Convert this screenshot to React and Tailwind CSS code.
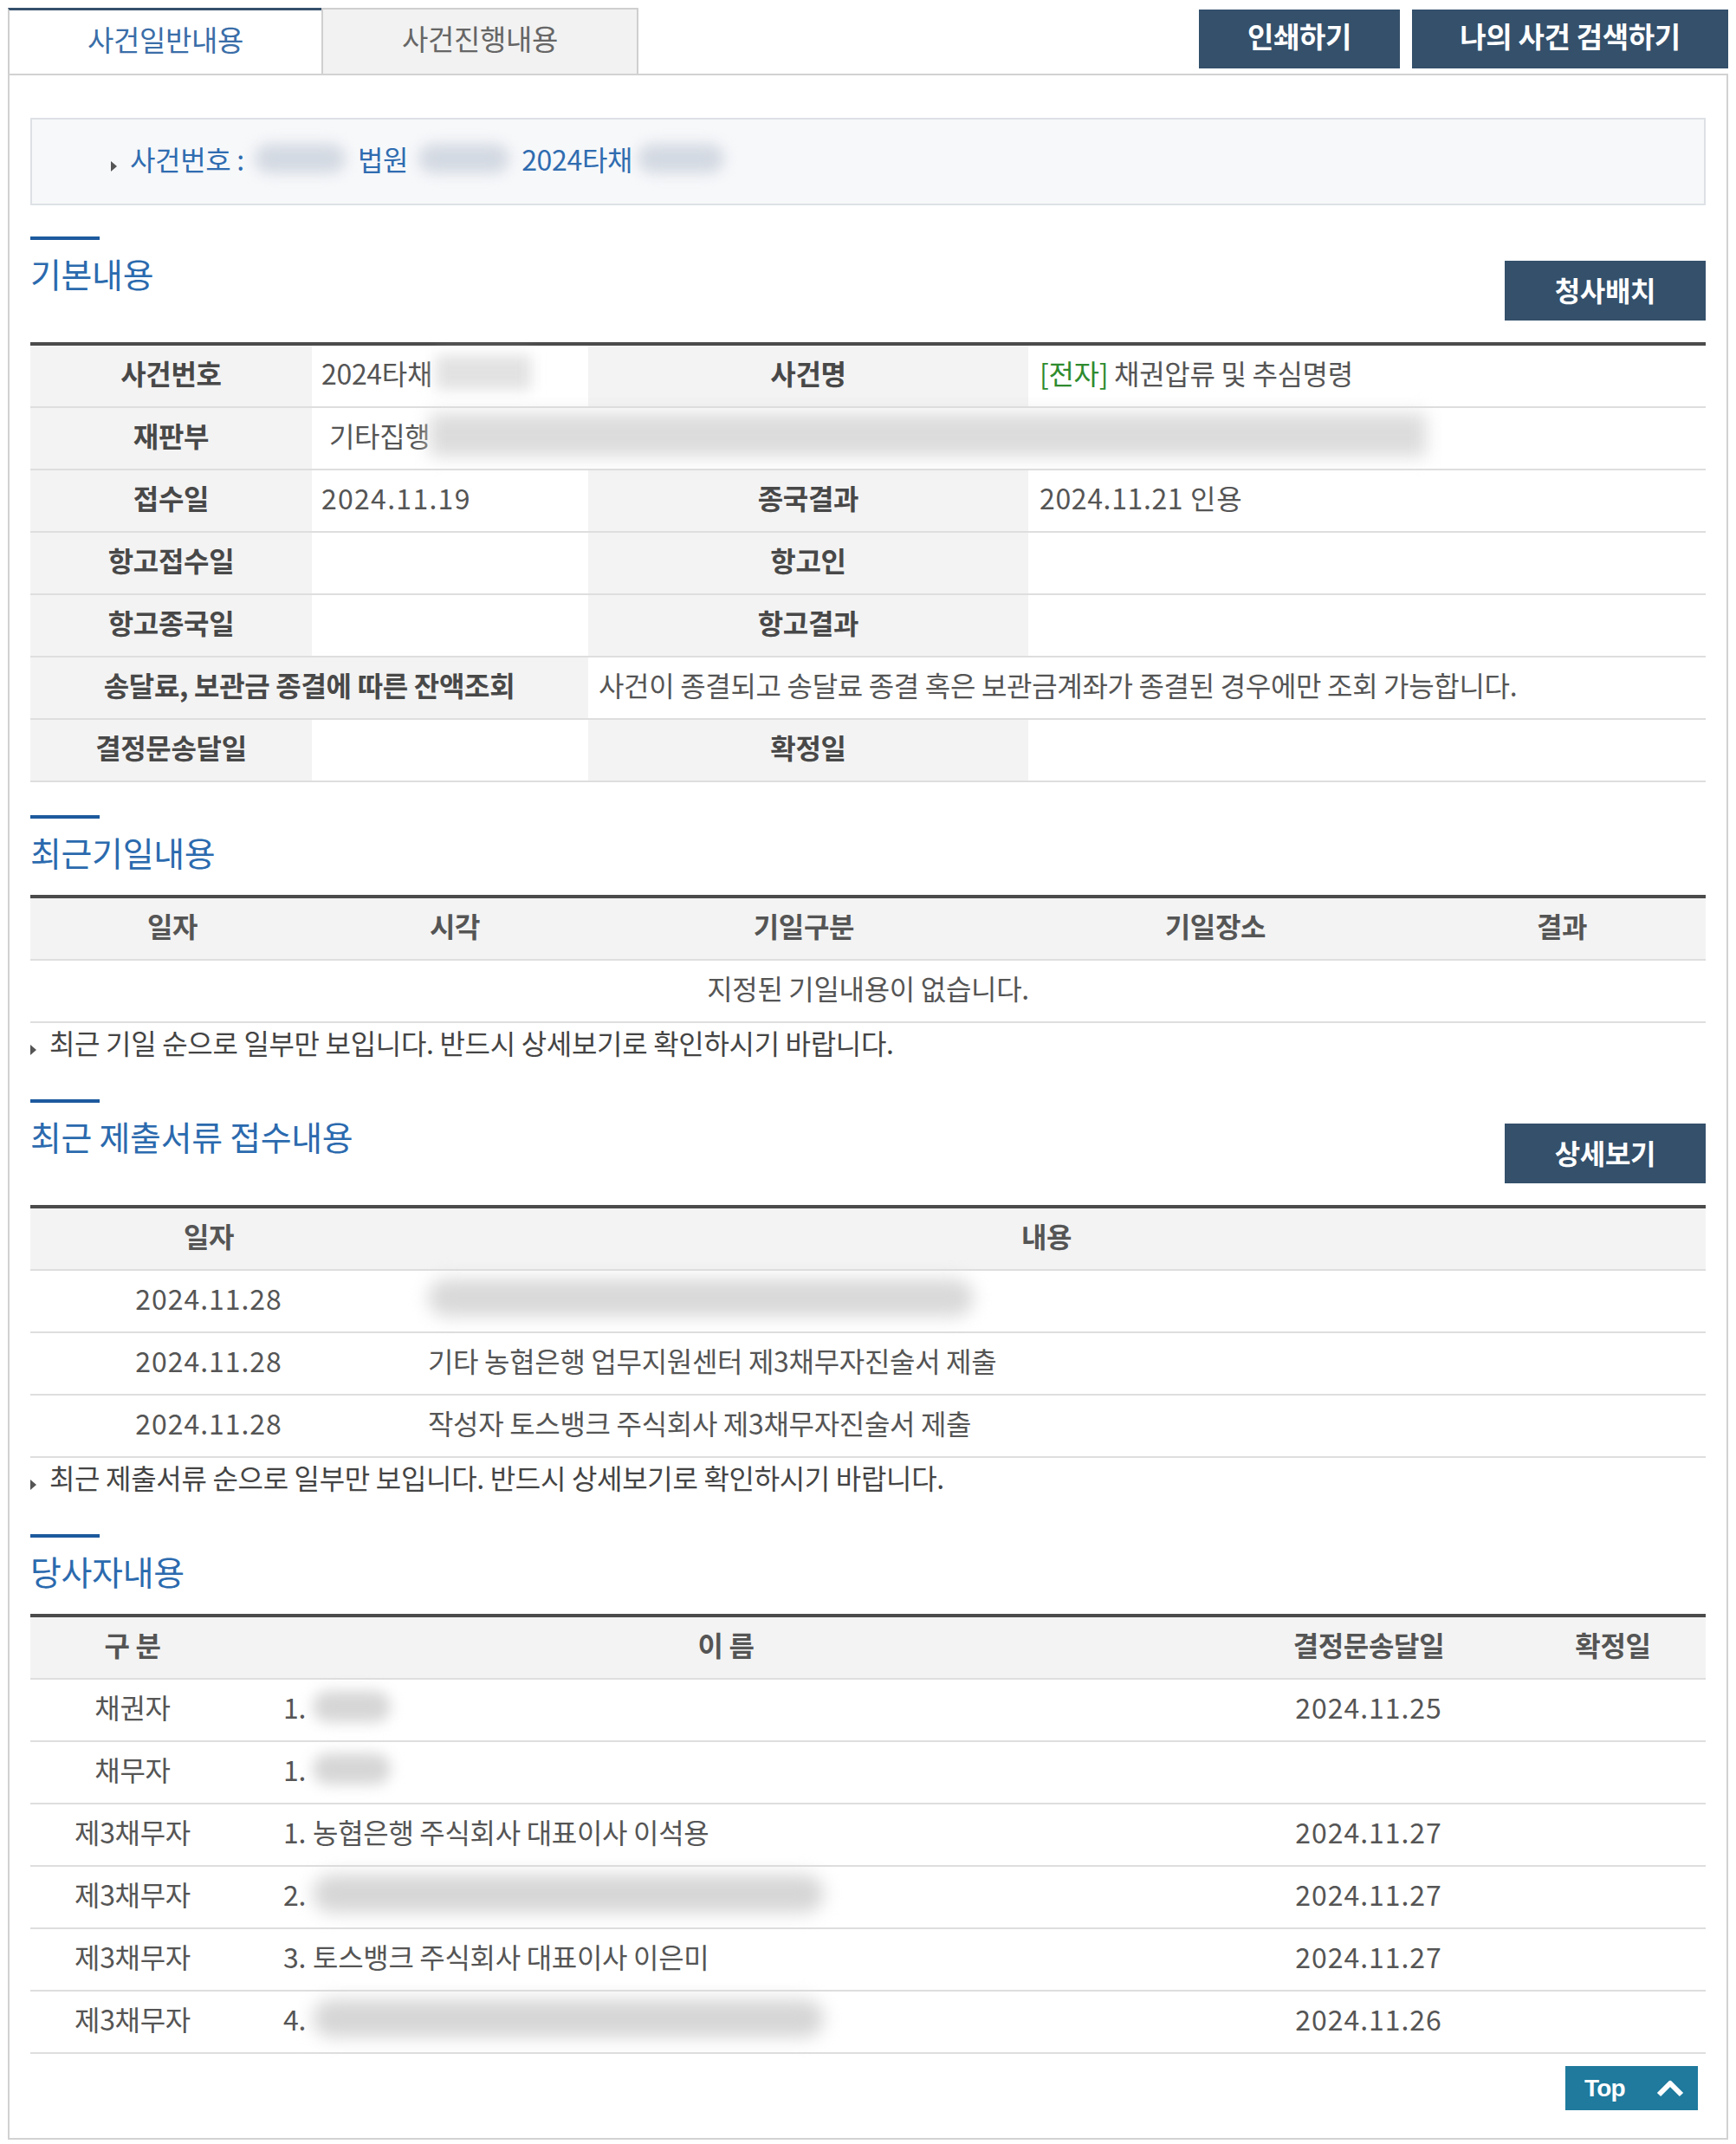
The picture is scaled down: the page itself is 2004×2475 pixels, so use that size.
import { useState } from "react";

// 기본내용 rows
const basicRows = [
    { l1: "사건번호", v1: "2024타채", blur1: true, l2: "사건명", v2: "case" },
    { l1: "재판부", v1: "기타집행", court: true },
    { l1: "접수일", v1: "2024.11.19", num: true, l2: "종국결과", v2: "2024.11.21 인용" },
    { l1: "항고접수일", v1: "", l2: "항고인", v2: "" },
    { l1: "항고종국일", v1: "", l2: "항고결과", v2: "" },
    { wide: true, l1: "송달료, 보관금 종결에 따른 잔액조회", v1: "사건이 종결되고 송달료 종결 혹은 보관금계좌가 종결된 경우에만 조회 가능합니다." },
    { l1: "결정문송달일", v1: "", l2: "확정일", v2: "" },
];

const docs = [
    { date: "2024.11.28", text: "", hidden: true },
    { date: "2024.11.28", text: "기타 농협은행 업무지원센터 제3채무자진술서 제출" },
    { date: "2024.11.28", text: "작성자 토스뱅크 주식회사 제3채무자진술서 제출" },
];

const parties = [
    { type: "채권자", no: "1.", name: "", blur: "short", date: "2024.11.25" },
    { type: "채무자", no: "1.", name: "", blur: "short", date: "" },
    { type: "제3채무자", no: "1.", name: "농협은행 주식회사 대표이사 이석용", date: "2024.11.27" },
    { type: "제3채무자", no: "2.", name: "", blur: "long", date: "2024.11.27" },
    { type: "제3채무자", no: "3.", name: "토스뱅크 주식회사 대표이사 이은미", date: "2024.11.27" },
    { type: "제3채무자", no: "4.", name: "", blur: "long", date: "2024.11.26" },
];

// cell: centred vertically, nudged up a little for the CJK font
const cell = "flex items-center pb-[8px]";
const label = "flex items-center justify-center pb-[8px] bg-[#f3f3f3] font-bold text-[#484848]";

// small ▸ bullet
const Bullet = () => (
    <span className="mt-[18px] mr-[15px] h-0 w-0 border-y-[6px] border-l-[7px] border-y-transparent border-l-[#555]" />
);

const SectionHead = ({ title, button }) => (
    <div className={button ? "flex h-[122px] items-start justify-between" : "flex h-[92px] items-start justify-between"}>
        <div>
            <div className="h-[4px] w-[80px] bg-[#1d5a9e]" />
            <h2 className="mt-[14px] text-[39px] leading-[48px] text-[#2b6aae]">{title}</h2>
        </div>
        {button && (
            <button className="mt-[28px] h-[69px] w-[232px] bg-[#34506b] pb-[4px] text-[32px] font-bold text-white">
                {button}
            </button>
        )}
    </div>
);

const Note = ({ children }) => (
    <div className="flex h-[50px] items-center pb-[6px] text-[#444]">
        <Bullet />
        <span>{children}</span>
    </div>
);

const Row = ({ children, head }) => (
    <div className={head
        ? "flex h-[72px] border-b-2 border-[#dedede] bg-[#f3f3f3] text-center font-bold text-[#555]"
        : "flex h-[72px] border-b-2 border-[#dedede]"}
    >
        {children}
    </div>
);

const App = () => {
    const [tab, setTab] = useState(0);

    return (
        <div className="min-h-[2475px] w-full bg-white px-[9px] pt-[9px] font-['Noto_Sans_CJK_KR','Noto_Sans',sans-serif] text-[32px] tracking-[-0.01em] text-[#555]">

            {/* tabs + top buttons */}
            <div className="flex h-[76px] items-start justify-between">
                <div className="flex h-[76px]">
                    <div
                        onClick={() => setTab(0)}
                        className={tab === 0
                            ? "flex h-[76px] w-[362px] items-center justify-center border-t-[3px] border-l-2 border-t-[#34506b] border-l-[#cfcfcf] bg-white pb-[6px] text-[33px] text-[#3a6ea8]"
                            : "flex h-[76px] w-[362px] items-center justify-center border-2 border-b-0 border-[#cfcfcf] bg-[#f2f2f2] pb-[6px] text-[33px] text-[#666]"}
                    >
                        사건일반내용
                    </div>
                    <div
                        onClick={() => setTab(1)}
                        className={tab === 1
                            ? "flex h-[76px] w-[366px] items-center justify-center border-t-[3px] border-r-2 border-t-[#34506b] border-r-[#cfcfcf] bg-white pb-[6px] text-[33px] text-[#3a6ea8]"
                            : "flex h-[76px] w-[366px] items-center justify-center border-2 border-b-0 border-[#cfcfcf] bg-[#f2f2f2] pb-[6px] text-[33px] text-[#666]"}
                    >
                        사건진행내용
                    </div>
                </div>
                <div className="flex gap-[14px] pt-[2px]">
                    <button className="h-[68px] w-[232px] bg-[#34506b] pb-[6px] text-[33px] font-bold text-white">인쇄하기</button>
                    <button className="h-[68px] w-[365px] bg-[#34506b] pb-[6px] text-[33px] font-bold text-white">나의 사건 검색하기</button>
                </div>
            </div>

            <div className="border-2 border-[#d2d2d2] px-[24px] pt-[49px] pb-[32px]">

                {/* case number box */}
                <div className="flex h-[101px] items-center border-2 border-[#dde1e6] bg-[#f7f8fa] pb-[8px] pl-[91px] text-[#2f6cb0]">
                    <Bullet />
                    <span>사건번호 :</span>
                    <span className="ml-[12px] h-[34px] w-[105px] rounded-full bg-[#d3d9e2] blur-[8px]" />
                    <span className="ml-[14px]">법원</span>
                    <span className="ml-[12px] h-[34px] w-[105px] rounded-full bg-[#d3d9e2] blur-[8px]" />
                    <span className="ml-[14px]">2024타채</span>
                    <span className="ml-[6px] h-[34px] w-[100px] rounded-full bg-[#d3d9e2] blur-[8px]" />
                </div>

                {/* 기본내용 */}
                <div className="mt-[36px]">
                    <SectionHead title="기본내용" button="청사배치" />
                    <div className="border-t-4 border-[#4b4b4b]">
                        {basicRows.map((r, i) =>
                            r.wide ? (
                                <Row key={i}>
                                    <div className={`${label} w-[644px]`}>{r.l1}</div>
                                    <div className={`${cell} flex-1 pl-[12px]`}>{r.v1}</div>
                                </Row>
                            ) : (
                                <Row key={i}>
                                    <div className={`${label} w-[325px]`}>{r.l1}</div>
                                    {r.court ? (
                                        <div className={`${cell} flex-1 pl-[20px]`}>
                                            <span>{r.v1}</span>
                                            <span className="h-[50px] w-[1150px] bg-[#dcdcdc] blur-[10px]" />
                                        </div>
                                    ) : (
                                        <>
                                            <div className={`${cell} w-[319px] pl-[11px]`}>
                                                <span className={r.num ? "tracking-[0.04em]" : ""}>{r.v1}</span>
                                                {r.blur1 && <span className="ml-[4px] h-[40px] w-[110px] bg-[#e2e2e2] blur-[8px]" />}
                                            </div>
                                            <div className={`${label} w-[508px]`}>{r.l2}</div>
                                            <div className={`${cell} flex-1 pl-[13px]`}>
                                                {r.v2 === "case" ? (
                                                    <span><span className="text-[#2e8b2e]">[전자]</span> 채권압류 및 추심명령</span>
                                                ) : (
                                                    <span className="tracking-[0.02em]">{r.v2}</span>
                                                )}
                                            </div>
                                        </>
                                    )}
                                </Row>
                            )
                        )}
                    </div>
                </div>

                {/* 최근기일내용 */}
                <div className="mt-[38px]">
                    <SectionHead title="최근기일내용" />
                    <div className="border-t-4 border-[#4b4b4b]">
                        <Row head>
                            <div className={`${cell} w-[328px] justify-center`}>일자</div>
                            <div className={`${cell} w-[324px] justify-center`}>시각</div>
                            <div className={`${cell} w-[482px] justify-center`}>기일구분</div>
                            <div className={`${cell} w-[468px] justify-center`}>기일장소</div>
                            <div className={`${cell} flex-1 justify-center`}>결과</div>
                        </Row>
                        <Row>
                            <div className={`${cell} flex-1 justify-center`}>지정된 기일내용이 없습니다.</div>
                        </Row>
                    </div>
                    <Note>최근 기일 순으로 일부만 보입니다. 반드시 상세보기로 확인하시기 바랍니다.</Note>
                </div>

                {/* 최근 제출서류 접수내용 */}
                <div className="mt-[38px]">
                    <SectionHead title="최근 제출서류 접수내용" button="상세보기" />
                    <div className="border-t-4 border-[#4b4b4b]">
                        <Row head>
                            <div className={`${cell} w-[412px] justify-center`}>일자</div>
                            <div className={`${cell} flex-1 justify-center`}>내용</div>
                        </Row>
                        {docs.map((d, i) => (
                            <Row key={i}>
                                <div className={`${cell} w-[412px] justify-center tracking-[0.03em]`}>{d.date}</div>
                                <div className={`${cell} flex-1 pl-[47px]`}>
                                    {d.hidden ? (
                                        <span className="h-[44px] w-[630px] rounded-full bg-[#d9d9d9] blur-[10px]" />
                                    ) : d.text}
                                </div>
                            </Row>
                        ))}
                    </div>
                    <Note>최근 제출서류 순으로 일부만 보입니다. 반드시 상세보기로 확인하시기 바랍니다.</Note>
                </div>

                {/* 당사자내용 */}
                <div className="mt-[38px]">
                    <SectionHead title="당사자내용" />
                    <div className="border-t-4 border-[#4b4b4b]">
                        <Row head>
                            <div className={`${cell} w-[236px] justify-center`}>구 분</div>
                            <div className={`${cell} w-[1134px] justify-center`}>이 름</div>
                            <div className={`${cell} w-[350px] justify-center`}>결정문송달일</div>
                            <div className={`${cell} flex-1 justify-center`}>확정일</div>
                        </Row>
                        {parties.map((p, i) => (
                            <Row key={i}>
                                <div className={`${cell} w-[236px] justify-center`}>{p.type}</div>
                                <div className={`${cell} w-[1134px] pl-[56px]`}>
                                    <span>{p.no}</span>
                                    {p.name && <span className="ml-[8px]">{p.name}</span>}
                                    {p.blur === "short" && <span className="ml-[8px] h-[36px] w-[90px] rounded-full bg-[#d6d6d6] blur-[8px]" />}
                                    {p.blur === "long" && <span className="ml-[8px] h-[44px] w-[590px] rounded-full bg-[#d6d6d6] blur-[10px]" />}
                                </div>
                                <div className={`${cell} w-[350px] justify-center tracking-[0.03em]`}>{p.date}</div>
                                <div className="flex-1" />
                            </Row>
                        ))}
                    </div>
                </div>

                {/* top button */}
                <div className="mt-[14px] flex justify-end pr-[9px]">
                    <button className="flex h-[51px] w-[153px] items-center justify-between bg-[#1f7a9d] pl-[22px] pr-[16px] font-['Liberation_Sans',sans-serif] text-[28px] font-bold tracking-[-0.03em] text-white">
                        <span>Top</span>
                        <svg width="32" height="20" viewBox="0 0 32 20" fill="none">
                            <polyline points="3,17 16,4 29,17" stroke="white" strokeWidth="6" strokeLinejoin="round" />
                        </svg>
                    </button>
                </div>
            </div>
        </div>
    );
};

export default App;
